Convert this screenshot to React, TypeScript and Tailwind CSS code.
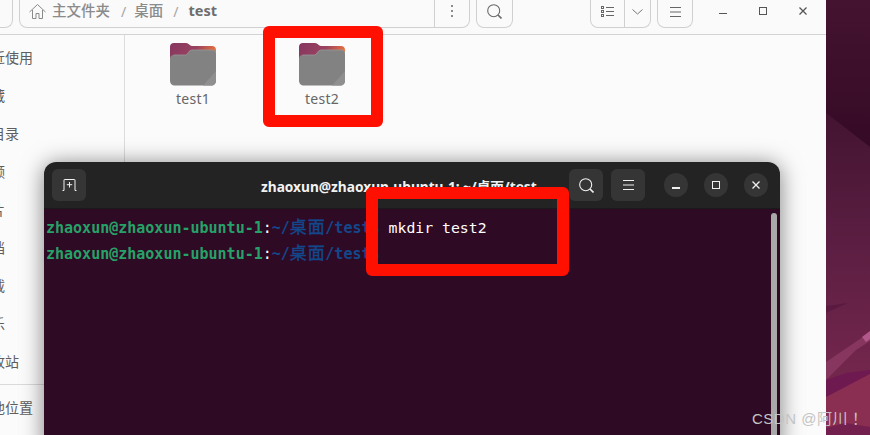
import React from "react";

const sidebar = ["最近使用", "收藏", "主目录", "视频", "图片", "文档", "下载", "音乐", "回收站"];

function Folder({ id }: { id: string }) {
  return (
    <svg width="46" height="43" viewBox="0 0 46 43">
      <defs>
        <linearGradient id={`b${id}`} x1="0" y1="0" x2="1" y2="0.25">
          <stop offset="0" stopColor="#873660" />
          <stop offset="0.6" stopColor="#9a4360" />
          <stop offset="1" stopColor="#e8703e" />
        </linearGradient>
      </defs>
      <path d="M4 0H16C19 0 19.500 3 22 3H42C44.500 3 46 4.500 46 7V22H0V4C0 1.500 1.500 0 4 0Z" fill={`url(#b${id})`} />
      <path d="M3.500 12H15.500C18 12 18.500 7 22 7H42.500C44.500 7 46 8.500 46 10.500V37.500C46 40.500 44 42.500 41 42.500H5C2 42.500 0 40.500 0 37.500V15.500C0 13.500 1.500 12 3.500 12Z" fill="#828282" />
      <path d="M3.500 12H15.500C18 12 18.500 7 22 7H42.500C44.500 7 46 8.500 46 10.500" fill="none" stroke="#979797" strokeWidth="0.8" />
      <path d="M46 28V37.500C46 40.500 44 42.500 41 42.500H33Z" fill="#8f8f8f" />
    </svg>
  );
}

function Prompt({ command }: { command?: string }) {
  return (
    <div className="h-[26px] whitespace-pre">
      <span className="font-bold text-[#26a269]">zhaoxun@zhaoxun-ubuntu-1</span>
      <span className="text-white">:</span>
      <span className="font-bold text-[#12488b]">~/<span className="inline-block w-[35.500px] text-[17px] tracking-[1px] font-normal [-webkit-text-stroke:0.4px_#12488b]">桌面</span>/test$ </span>
      {command && <span className="text-[14.800px] text-white">{command}</span>}
    </div>
  );
}

function Wallpaper() {
  return (
    <svg className="block h-full w-full" viewBox="0 0 44 435" preserveAspectRatio="none">
      <defs>
        <linearGradient id="wt" x1="0" y1="0" x2="0" y2="1">
          <stop offset="0" stopColor="#44132f" />
          <stop offset="1" stopColor="#350a26" />
        </linearGradient>
        <linearGradient id="wm" x1="0" y1="0" x2="0" y2="1">
          <stop offset="0" stopColor="#431431" />
          <stop offset="0.4" stopColor="#5b1e42" />
          <stop offset="0.75" stopColor="#70254b" />
          <stop offset="1" stopColor="#7d2a50" />
        </linearGradient>
      </defs>
      <rect width="44" height="150" fill="url(#wt)" />
      <path d="M0 113L44 147V435H0Z" fill="url(#wm)" />
      <path d="M0 306L22 303L4 311L0 313Z" fill="#5a1a40" />
      <path d="M0 362L34 339L44 331V341L30 350L0 380Z" fill="#86365f" />
      <path d="M36 337L44 331V339L40 342Z" fill="#b2588a" />
      <path d="M0 380L20 373L44 370V435H0Z" fill="#6e1a50" />
      <path d="M0 397L44 374V435H0Z" fill="#8a2e52" />
      <path d="M0 428L20 423L44 427V435H0Z" fill="#74204f" />
    </svg>
  );
}

export default function App() {
  return (
    <div className="relative flex h-[435px] w-[870px] overflow-hidden bg-[#350a26] font-['Noto_Sans','Noto_Sans_CJK_SC',sans-serif]">
      {/* Files window */}
      <div className="flex h-full w-[826px] shrink-0 flex-col bg-[#fbfbfb]">
        <header className="flex h-[35px] shrink-0 items-start overflow-hidden border-b border-[#d3d3d3] bg-[#fafafa]">
          <div className="-mt-[12px] h-[40px] w-[13px] rounded-br-[8px] border-r border-b border-[#d0d0d0]" />
          <div className="-mt-[12px] ml-[6px] flex h-[40px] w-[451px] items-center rounded-b-[8px] border border-t-0 border-[#d0d0d0] pt-[12px] pl-[9px]">
            <svg width="17" height="17" viewBox="0 0 17 16" fill="none" stroke="#8a8a8a" strokeWidth="1" className="mb-[5px]">
              <path d="M0.500 8.500L8.500 1L16.500 8.500M3.500 6.500V15H7V10H10V15H13.500V6.500" />
            </svg>
            <div className="flex items-center pb-[5px]">
              <span className="ml-[6px] text-[14.500px] font-medium text-[#8b8b8b]">主文件夹</span>
              <span className="ml-[11px] text-[14px] text-[#a5a5a5]">/</span>
              <span className="ml-[8px] text-[14.500px] font-medium text-[#8b8b8b]">桌面</span>
              <span className="ml-[10px] text-[14px] text-[#a5a5a5]">/</span>
              <span className="ml-[10px] text-[14.500px] font-bold text-[#6e6e6e]">test</span>
            </div>
            <div className="-mt-[12px] ml-auto flex h-[39px] w-[35px] items-center justify-center border-l border-[#d0d0d0] pt-[7px]">
              <div className="flex flex-col gap-[2.500px]">
                <i className="block h-[2.500px] w-[2.500px] rounded-full bg-[#666]" />
                <i className="block h-[2.500px] w-[2.500px] rounded-full bg-[#666]" />
                <i className="block h-[2.500px] w-[2.500px] rounded-full bg-[#666]" />
              </div>
            </div>
          </div>
          <div className="-mt-[12px] ml-[6px] flex h-[40px] w-[37px] items-center justify-center rounded-b-[8px] border border-t-0 border-[#d0d0d0] pt-[12px] pb-[4px]">
            <svg width="15" height="15" viewBox="0 0 15 15" fill="none" stroke="#6a6a6a" strokeWidth="1.100">
              <circle cx="6.700" cy="6.700" r="6" />
              <path d="M11 11L14.500 14.500" strokeWidth="1.600" />
            </svg>
          </div>
          <div className="-mt-[12px] ml-[77px] flex h-[40px] w-[61px] rounded-b-[8px] border border-t-0 border-[#d0d0d0]">
            <div className="flex w-[34px] items-center justify-center border-r border-[#d0d0d0] pt-[12px] pb-[4px]">
              <svg width="13" height="11" viewBox="0 0 13 11" fill="none" stroke="#666" strokeWidth="1">
                <rect x="0.500" y="0.500" width="2" height="2" />
                <rect x="0.500" y="4.500" width="2" height="2" />
                <rect x="0.500" y="8.500" width="2" height="2" />
                <path d="M5 1.500H13M5 5.500H13M5 9.500H13" />
              </svg>
            </div>
            <div className="flex flex-1 items-center justify-center pt-[12px] pb-[4px]">
              <svg width="11" height="6" viewBox="0 0 11 6" fill="none" stroke="#777" strokeWidth="1">
                <path d="M0.500 0.500L5.500 5L10.500 0.500" />
              </svg>
            </div>
          </div>
          <div className="-mt-[12px] ml-[6px] flex h-[40px] w-[36px] items-center justify-center rounded-b-[8px] border border-t-0 border-[#d0d0d0] pt-[12px] pb-[4px]">
            <svg width="11" height="10" viewBox="0 0 11 10" fill="none" stroke="#666" strokeWidth="1" className="h-[10px] w-[11px]">
              <path d="M0 0.500H11M0 5H11M0 9.500H11" />
            </svg>
          </div>
          <div className="ml-[10px] flex">
            <div className="flex h-[22px] w-[40px] items-center justify-center">
              <div className="mt-[5px] h-[1.500px] w-[8px] bg-[#555]" />
            </div>
            <div className="flex h-[22px] w-[40px] items-center justify-center">
              <div className="h-[8px] w-[8px] border-[1.500px] border-[#555]" />
            </div>
            <div className="flex h-[22px] w-[40px] items-center justify-center">
              <svg width="8" height="8" viewBox="0 0 8 8" fill="none" stroke="#555" strokeWidth="1.300">
                <path d="M0.500 0.500L7.500 7.500M7.500 0.500L0.500 7.500" />
              </svg>
            </div>
          </div>
        </header>
        <div className="flex min-h-0 flex-1">
          <aside className="w-[125px] shrink-0 overflow-hidden border-r border-[#dcdcdc] pt-[3px] text-[14px] text-[#5e5e5e] font-['Noto_Sans_CJK_SC','Noto_Sans',sans-serif]">
            {sidebar.map((s) => (
              <div key={s} className="-ml-[23px] flex h-[38px] items-center whitespace-nowrap">{s}</div>
            ))}
            <div className="mt-[4px] h-px bg-[#dadada]" />
            <div className="mt-[3px] -ml-[23px] flex h-[38px] items-center whitespace-nowrap">其他位置</div>
          </aside>
          <main className="flex flex-1 items-start gap-[33px] pt-[8px] pl-[20px]">
            {["test1", "test2"].map((n) => (
              <div key={n} className="flex w-[96px] flex-col items-center">
                <Folder id={n} />
                <span className="mt-[3px] text-[14px] leading-[20px] tracking-[0.25px] text-[#666]">{n}</span>
              </div>
            ))}
          </main>
        </div>
      </div>

      {/* Wallpaper */}
      <div className="min-w-0 flex-1">
        <Wallpaper />
      </div>

      {/* Terminal window */}
      <section className="absolute top-[162px] left-[44px] flex h-[290px] w-[736px] flex-col overflow-hidden rounded-t-[12px] shadow-[0_2px_22px_rgba(0,0,0,0.5)]">
        <div className="flex h-[47px] shrink-0 items-center bg-[#232323] border-b border-[#1a1a1a]">
          <div className="ml-[8px] flex h-[32px] w-[34px] items-center justify-center rounded-[6px] bg-[#353535]">
            <svg width="15" height="12" viewBox="0 0 15 12" fill="none" stroke="#f0f0f0" strokeWidth="1">
              <path d="M0.500 11.500H2V1C2 0.700 2.200 0.500 2.500 0.500H12.500C12.800 0.500 13 0.700 13 1V11.500H14.500" />
              <path d="M7.500 3V8.500M4.800 5.700H10.200" />
            </svg>
          </div>
          <div className="mt-[5px] ml-[175px] whitespace-nowrap text-[13.700px] font-bold text-[#f2f2f2]">zhaoxun@zhaoxun-ubuntu-1: ~/桌面/test</div>
          <div className="ml-auto flex h-[32px] w-[34px] items-center justify-center rounded-[6px] bg-[#353535]">
            <svg width="15" height="15" viewBox="0 0 15 15" fill="none" stroke="#f0f0f0" strokeWidth="1.100">
              <circle cx="6.700" cy="6.700" r="6" />
              <path d="M11 11L14.500 14.500" strokeWidth="1.600" />
            </svg>
          </div>
          <div className="ml-[8px] flex h-[32px] w-[34px] items-center justify-center rounded-[6px] bg-[#353535]">
            <svg width="11" height="10" viewBox="0 0 11 10" fill="none" stroke="#f0f0f0" strokeWidth="1" className="h-[10px] w-[11px]">
              <path d="M0 0.500H11M0 5H11M0 9.500H11" />
            </svg>
          </div>
          <div className="mr-[12px] ml-[19px] flex gap-[16px]">
            <div className="flex h-[24px] w-[24px] items-center justify-center rounded-full bg-[#353535]">
              <div className="mt-[6px] h-[1.500px] w-[8px] bg-[#f0f0f0]" />
            </div>
            <div className="flex h-[24px] w-[24px] items-center justify-center rounded-full bg-[#353535]">
              <div className="h-[8px] w-[8px] border-[1.500px] border-[#f0f0f0]" />
            </div>
            <div className="flex h-[24px] w-[24px] items-center justify-center rounded-full bg-[#353535]">
              <svg width="8" height="8" viewBox="0 0 8 8" fill="none" stroke="#f0f0f0" strokeWidth="1.300">
                <path d="M0.500 0.500L7.500 7.500M7.500 0.500L0.500 7.500" />
              </svg>
            </div>
          </div>
        </div>
        <div className="relative flex-1 bg-[#2f0a24] pt-[5px] pl-[2px] font-['DejaVu_Sans_Mono','Noto_Sans_CJK_SC',monospace] text-[15px] leading-[26px]">
          <Prompt command="mkdir test2" />
          <Prompt />
          <div className="absolute top-[4px] right-[3px] bottom-0 w-[6px] rounded-t-[3px] bg-[#a9a9a9]" />
        </div>
      </section>

      {/* Red annotation boxes */}
      <div className="absolute top-[26px] left-[263px] h-[101px] w-[120px] rounded-[6px] border-[12px] border-[#ff1000]" />
      <div className="absolute top-[187px] left-[366px] h-[89px] w-[203px] rounded-[6px] border-[12px] border-[#ff1000]" />

      {/* Watermark */}
      <div className="absolute top-[409px] left-[752px] whitespace-nowrap text-[15px] leading-[20px] tracking-[0.5px] text-[#c4c4c4] font-['Liberation_Sans','Noto_Sans_CJK_SC',sans-serif]">CSDN @阿川<span className="ml-[4px]">！</span></div>
    </div>
  );
}
